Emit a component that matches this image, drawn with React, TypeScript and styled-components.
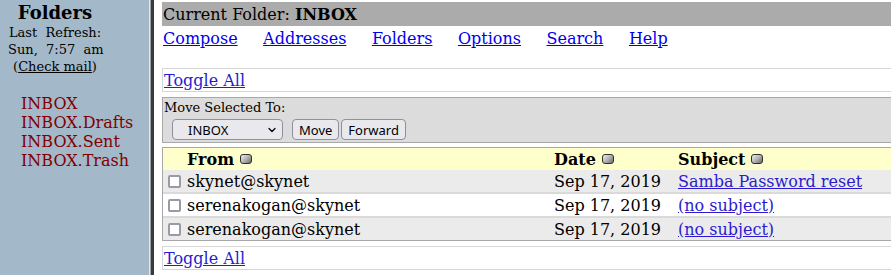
import React from "react";
import styled, { createGlobalStyle } from "styled-components";
import { ChevronDown } from "lucide-react";

const GlobalStyle = createGlobalStyle`
  html, body {
    margin: 0;
    padding: 0;
    height: 100%;
    overflow: hidden;
    background: #fff;
  }
  body {
    font-family: "DejaVu Serif", serif;
    font-size: 16px;
    color: #000;
  }
  #root {
    height: 100%;
  }
`;

const Frameset = styled.div`
  display: flex;
  height: 100%;
`;

const LeftFrame = styled.div`
  flex: 0 0 149px;
  box-sizing: border-box;
  padding: 2px 0 0 8px;
  background: #a3b8c9;
`;

const FrameBorder = styled.div`
  flex: 0 0 5px;
  background: linear-gradient(
    to right,
    #e6e6e6 0 1px,
    #a0a0a0 1px 2px,
    #3a3a3a 2px 5px
  );
`;

const RightFrame = styled.div`
  flex: 1;
  min-width: 0;
  overflow: hidden;
  padding: 2px 0 0 8px;
`;

const FolderHead = styled.div`
  width: 94px;
  text-align: center;
`;

const FolderTitle = styled.div`
  font-size: 18px;
  font-weight: bold;
  line-height: 21px;
  margin-bottom: 1px;
`;

const SmallLine = styled.div`
  font-size: 13px;
  line-height: 17px;
  white-space: nowrap;
`;

const PlainLink = styled.a`
  color: #000;
  text-decoration: underline;
  cursor: pointer;
`;

const FolderList = styled.div`
  margin-top: 19px;
  padding-left: 13px;
`;

const FolderLink = styled.a`
  display: block;
  color: #800000;
  line-height: 19px;
  text-decoration: none;
  white-space: nowrap;
  cursor: pointer;
`;

const TitleBar = styled.div`
  display: flex;
  align-items: center;
  height: 24px;
  padding-left: 1px;
  background: #ababab;
  white-space: nowrap;
`;

const NavRow = styled.div`
  display: flex;
  align-items: center;
  gap: 25.5px;
  height: 24px;
  padding-left: 1px;
`;

const NavLink = styled.a`
  color: #0000ee;
  text-decoration: underline;
  cursor: pointer;
`;

const ToggleBox = styled.div<{ $top: number }>`
  display: flex;
  align-items: center;
  height: 22px;
  margin-top: ${(p) => p.$top}px;
  padding-left: 1px;
  border: 1px solid #d6d6d6;
  border-right: none;
`;

const ToggleLink = styled.a`
  color: #2b1bd0;
  text-decoration: underline;
  cursor: pointer;
`;

const MoveBox = styled.div`
  margin-top: 5px;
  padding: 2px 2px 2px 1px;
  background: #dcdcdc;
  border: 1px solid #a8a8a8;
  border-right: none;
`;

const MoveLabel = styled.div`
  font-size: 13px;
  line-height: 15px;
`;

const Controls = styled.div`
  display: flex;
  align-items: center;
  margin: 4px 0 0 8px;
`;

const SelectWrap = styled.div`
  position: relative;
  width: 111px;
  height: 21px;
  margin-right: 9px;
`;

const FolderSelect = styled.select`
  appearance: none;
  box-sizing: border-box;
  width: 100%;
  height: 100%;
  padding: 0 0 0 15px;
  background: #e9e9ed;
  border: 1px solid #8f8f9d;
  border-radius: 4px;
  font-family: "Noto Sans", "DejaVu Sans", sans-serif;
  font-size: 13px;
  color: #000;
`;

const SelectChevron = styled(ChevronDown)`
  position: absolute;
  right: 5px;
  top: 5px;
  pointer-events: none;
`;

const Button = styled.button`
  box-sizing: border-box;
  height: 21px;
  padding: 0 6px;
  margin-right: 2px;
  background: #e9e9ed;
  border: 1px solid #8f8f9d;
  border-radius: 4px;
  font-family: "Noto Sans", "DejaVu Sans", sans-serif;
  font-size: 13px;
  color: #000;
`;

const MessageTable = styled.div`
  margin-top: 4px;
  border: 1px solid #a8a8a8;
  border-right: none;
`;

const Row = styled.div<{ $bg: string; $sep?: boolean }>`
  display: grid;
  grid-template-columns: 24px 367px 124px 1fr;
  align-items: center;
  height: 22px;
  background: ${(p) => p.$bg};
  border-top: ${(p) => (p.$sep ? "2px solid #dadada" : "none")};
  white-space: nowrap;
`;

const HeadCell = styled.div`
  display: flex;
  align-items: center;
  gap: 6px;
  font-weight: bold;
`;

const SortIcon = styled.span`
  display: inline-block;
  box-sizing: border-box;
  width: 12px;
  height: 10px;
  border: 1px solid #2e2e2e;
  border-radius: 3px;
  background: linear-gradient(135deg, #f0f0f0 0%, #b4b4b4 50%, #6a6a6a 100%);
`;

const Check = styled.span`
  display: block;
  box-sizing: border-box;
  width: 13px;
  height: 13px;
  margin-left: 5px;
  background: #fff;
  border: 2px solid #9a99a6;
  border-radius: 2px;
`;

const SubjectLink = styled.a`
  color: #2b1bd0;
  text-decoration: underline;
  cursor: pointer;
`;

const messages = [
  { from: "skynet@skynet", date: "Sep 17, 2019", subject: "Samba Password reset" },
  { from: "serenakogan@skynet", date: "Sep 17, 2019", subject: "(no subject)" },
  { from: "serenakogan@skynet", date: "Sep 17, 2019", subject: "(no subject)" },
];

const navItems = ["Compose", "Addresses", "Folders", "Options", "Search", "Help"];
const folders = ["INBOX", "INBOX.Drafts", "INBOX.Sent", "INBOX.Trash"];

export default function App() {
  return (
    <>
      <GlobalStyle />
      <Frameset>
        <LeftFrame>
          <FolderHead>
            <FolderTitle>Folders</FolderTitle>
            <SmallLine>Last&nbsp; Refresh:</SmallLine>
            <SmallLine>Sun,&nbsp; 7:57&nbsp; am</SmallLine>
            <SmallLine>
              (<PlainLink>Check mail</PlainLink>)
            </SmallLine>
          </FolderHead>
          <FolderList>
            {folders.map((f) => (
              <FolderLink key={f}>{f}</FolderLink>
            ))}
          </FolderList>
        </LeftFrame>
        <FrameBorder />
        <RightFrame>
          <TitleBar>
            Current Folder:&nbsp;<b>INBOX</b>
          </TitleBar>
          <NavRow>
            {navItems.map((n) => (
              <NavLink key={n}>{n}</NavLink>
            ))}
          </NavRow>
          <ToggleBox $top={18}>
            <ToggleLink>Toggle All</ToggleLink>
          </ToggleBox>
          <MoveBox>
            <MoveLabel>Move Selected To:</MoveLabel>
            <Controls>
              <SelectWrap>
                <FolderSelect defaultValue="INBOX">
                  {folders.map((f) => (
                    <option key={f} value={f}>
                      {f}
                    </option>
                  ))}
                </FolderSelect>
                <SelectChevron size={12} strokeWidth={2.5} />
              </SelectWrap>
              <Button>Move</Button>
              <Button>Forward</Button>
            </Controls>
          </MoveBox>
          <MessageTable>
            <Row $bg="#ffffcc">
              <span />
              <HeadCell>
                From <SortIcon />
              </HeadCell>
              <HeadCell>
                Date <SortIcon />
              </HeadCell>
              <HeadCell>
                Subject <SortIcon />
              </HeadCell>
            </Row>
            {messages.map((m, i) => (
              <Row key={i} $bg={i % 2 === 0 ? "#ebebeb" : "#ffffff"} $sep={i > 0}>
                <Check />
                <span>{m.from}</span>
                <span>{m.date}</span>
                <span>
                  <SubjectLink>{m.subject}</SubjectLink>
                </span>
              </Row>
            ))}
          </MessageTable>
          <ToggleBox $top={5}>
            <ToggleLink>Toggle All</ToggleLink>
          </ToggleBox>
        </RightFrame>
      </Frameset>
    </>
  );
}
